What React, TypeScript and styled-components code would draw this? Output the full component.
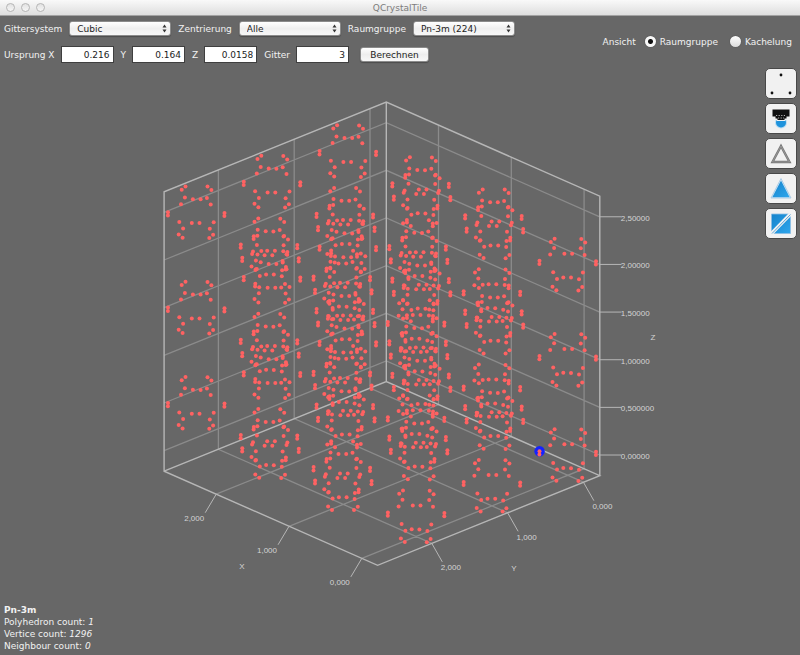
import React, { useState } from "react";
import styled, { createGlobalStyle } from "styled-components";

const GlobalStyle = createGlobalStyle`
  * { box-sizing: border-box; }
  body {
    margin: 0;
    background: #676767;
    color: #f2f2f2;
    font: 9px/12px "DejaVu Sans", Verdana, sans-serif;
  }
`;

const Window = styled.div`
  display: flex;
  flex-direction: column;
  min-height: 100vh;
`;

const TitleBar = styled.header`
  display: grid;
  grid-template-columns: 1fr auto 1fr;
  align-items: center;
  height: 16px;
  padding: 0 6px;
  background: linear-gradient(#f9f9f9, #dedede);
  border-bottom: 1px solid #a2a2a2;
`;

const WindowControls = styled.div`
  display: flex;
  gap: 6px;
`;

const Light = styled.span`
  width: 9px;
  height: 9px;
  border: 1px solid #b5b5b5;
  border-radius: 50%;
  background: linear-gradient(#e2e2e2, #f6f6f6);
`;

const Title = styled.h1`
  margin: 0;
  font-size: 9px;
  font-weight: 400;
  color: #7c7c7c;
`;

const Toolbar = styled.form`
  display: flex;
  justify-content: space-between;
  align-items: center;
  padding: 4px 8px 3px 4px;
`;

const Rows = styled.div`
  display: flex;
  flex-direction: column;
  gap: 9px;
`;

const Row = styled.div`
  display: flex;
  align-items: center;
  gap: 7px;
  height: 17px;
`;

const Field = styled.label<{ $gap: number }>`
  display: flex;
  align-items: center;
  gap: ${(p) => p.$gap}px;
  white-space: nowrap;
`;

const SelectBox = styled.span`
  position: relative;
  display: flex;
  width: 102px;
`;

const Select = styled.select`
  appearance: none;
  width: 100%;
  height: 15px;
  padding: 0 14px 0 7px;
  border: 1px solid #8b8b8b;
  border-radius: 3px;
  background: linear-gradient(#ffffff, #efefef 50%, #f7f7f7);
  box-shadow: 0 1px 1px #4c4c4c;
  color: #1c1c1c;
  font: inherit;
`;

const Arrows = styled.svg`
  position: absolute;
  right: 4px;
  top: 3px;
  pointer-events: none;
`;

const NumberInput = styled.input`
  width: 53px;
  height: 17px;
  padding: 0 3px;
  border: 1px solid #3f3f3f;
  border-radius: 0;
  background: #ffffff;
  color: #1c1c1c;
  font: inherit;
  text-align: right;
`;

const CalcButton = styled.button`
  width: 69px;
  height: 15px;
  margin-left: 4px;
  padding: 0;
  border: 1px solid #8b8b8b;
  border-radius: 3px;
  background: linear-gradient(#ffffff, #eeeeee 50%, #f8f8f8);
  box-shadow: 0 1px 1px #4c4c4c;
  color: #1c1c1c;
  font: inherit;
`;

const ViewGroup = styled.fieldset`
  display: flex;
  align-items: center;
  gap: 12px;
  margin: 0;
  padding: 0;
  border: 0;
`;

const ViewCaption = styled.span`
  margin-right: -3px;
`;

const RadioLabel = styled.label`
  display: flex;
  align-items: center;
  gap: 4px;
`;

const Radio = styled.input`
  appearance: none;
  width: 11px;
  height: 11px;
  margin: 0;
  border-radius: 50%;
  background: linear-gradient(#ffffff, #dcdcdc);
  box-shadow: 0 0 1px #333333;
  &:checked {
    background: radial-gradient(circle, #111111 0 2px, #f8f8f8 3px);
  }
`;

const Workspace = styled.main`
  display: flex;
  align-items: flex-start;
`;

const Plot = styled.svg`
  flex: 1;
  min-width: 0;
  display: block;
  font: 8px "Liberation Sans", Arial, sans-serif;
  fill: #d4d4d4;
`;

const Tools = styled.aside`
  display: flex;
  flex-direction: column;
  gap: 4px;
  width: 40px;
  padding: 2px 3px 0 5px;
`;

const ToolButton = styled.button`
  display: flex;
  align-items: center;
  justify-content: center;
  width: 32px;
  height: 31px;
  padding: 0;
  border: 1px solid #484848;
  border-radius: 5px;
  background: #f1f1f1;
  box-shadow: inset 0 0 1px #ffffff;
`;

const Status = styled.footer`
  padding: 5px 4px 0;
`;

const StatusLine = styled.div`
  line-height: 12px;
`;

type Vec = [number, number, number];

const seed: Vec = [0.216, 0.164, 0.0158];
const LOW = -0.216;
const HIGH = 2.716;

const project = ([x, y, z]: Vec): [number, number] => [
  567.7 - 72.8 * x - 75.8 * y,
  455.7 - 32.1 * x + 30.6 * y - 95.3 * z,
];

// Orbit of the seed under Pn-3m: 24 tetrahedral images and their inversions through (1/4, 1/4, 1/4).
const buildVertices = (cells: number): Vec[] => {
  const orders = [[0, 1, 2], [1, 2, 0], [2, 0, 1], [1, 0, 2], [0, 2, 1], [2, 1, 0]];
  const signs: Vec[] = [[1, 1, 1], [1, -1, -1], [-1, 1, -1], [-1, -1, 1]];
  const orbit: Vec[] = [];
  for (const o of orders) {
    for (const s of signs) {
      const p = o.map((n, i) => seed[n] * s[i]) as Vec;
      orbit.push(p, p.map((c) => 0.5 - c) as Vec);
    }
  }
  const all: Vec[] = [];
  for (let i = 0; i < cells; i++)
    for (let j = 0; j < cells; j++)
      for (let k = 0; k < cells; k++)
        for (const [x, y, z] of orbit) all.push([x + i, y + j, z + k]);
  return all;
};

const vertices = buildVertices(3);

const pathOf = (...pts: Vec[]) =>
  "M" + pts.map((p) => project(p).map((n) => n.toFixed(1)).join(" ")).join("L");

const gridPath = [
  ...[0, 1, 2].map((v) => pathOf([v, HIGH, LOW], [v, LOW, LOW], [v, LOW, HIGH])),
  ...[0, 1, 2].map((v) => pathOf([LOW, v, LOW], [HIGH, v, LOW], [HIGH, v, HIGH])),
  ...[0, 0.5, 1, 1.5, 2, 2.5].map((v) => pathOf([HIGH, HIGH, v], [HIGH, LOW, v], [LOW, LOW, v])),
].join("");

const framePath = [
  pathOf([HIGH, HIGH, LOW], [HIGH, LOW, LOW], [LOW, LOW, LOW], [LOW, HIGH, LOW], [HIGH, HIGH, LOW],
    [HIGH, HIGH, HIGH], [HIGH, LOW, HIGH], [LOW, LOW, HIGH], [LOW, LOW, LOW]),
  pathOf([HIGH, LOW, LOW], [HIGH, LOW, HIGH]),
].join("");

const zLabels = ["0,00000", "0,500000", "1,00000", "1,50000", "2,00000", "2,50000"];
const planeLabels = ["0,000", "1,000", "2,000"];

const CrystalPlot = () => {
  const [sx, sy] = project(seed);
  return (
    <Plot viewBox="0 67 760 533" role="img" aria-label="Pn-3m">
      <path d={gridPath} fill="none" stroke="#8b8b8b" strokeWidth="1.3" />
      <path d={framePath} fill="none" stroke="#b6b6b6" strokeWidth="1.4" />
      {zLabels.map((label, i) => {
        const [x, y] = project([LOW, LOW, i / 2]);
        return (
          <g key={label}>
            <path d={`M${x} ${y}h21.5`} stroke="#b6b6b6" />
            <text x={x + 21} y={y + 4}>{label}</text>
          </g>
        );
      })}
      {planeLabels.map((label, i) => {
        const [ax, ay] = project([i, HIGH, LOW]);
        const [bx, by] = project([LOW, i, LOW]);
        return (
          <g key={label}>
            <path d={`M${ax} ${ay}l-11 18.5M${bx} ${by}l10.5 18.5`} stroke="#b6b6b6" />
            <text x={ax - 12} y={ay + 27} textAnchor="end">{label}</text>
            <text x={bx + 9} y={by + 27}>{label}</text>
          </g>
        );
      })}
      <text x="242" y="570" textAnchor="middle">X</text>
      <text x="514" y="572" textAnchor="middle">Y</text>
      <text x="653" y="341" textAnchor="middle">Z</text>
      <circle cx={sx} cy={sy} r="5.2" fill="#1522ff" />
      <g fill="#ff6262">
        {vertices.map((v, i) => {
          const [x, y] = project(v);
          return <circle key={i} cx={x.toFixed(1)} cy={y.toFixed(1)} r="2" />;
        })}
      </g>
    </Plot>
  );
};

const PointsIcon = () => (
  <svg width="26" height="26" viewBox="0 0 26 26" fill="#111">
    <circle cx="13" cy="4" r="1.4" />
    <circle cx="4" cy="22" r="1.4" />
    <circle cx="22" cy="22" r="1.4" />
  </svg>
);

const CameraIcon = () => (
  <svg width="26" height="26" viewBox="0 0 26 26">
    <circle cx="13" cy="16.5" r="6" fill="#b9dcf3" />
    <circle cx="13" cy="16.5" r="5" fill="#1f93dc" />
    <path d="M7 9h12v3l-2 3H9l-2-3z" fill="#f1f1f1" />
    <path d="M4.500 3.500h17v7h-3v2h-2v1.500h-7v-1.500h-2v-2h-3z" fill="#111" />
    <path d="M8 9.500h10M10 12h6" stroke="#ddd" strokeWidth=".8" strokeDasharray="1.200 1.400" />
  </svg>
);

const OutlineIcon = () => (
  <svg width="26" height="26" viewBox="0 0 26 26">
    <path d="M13 5L21.500 21h-17z" fill="none" stroke="#777" strokeWidth="2.400" />
    <path d="M13 5L21.500 21h-17z" fill="none" stroke="#aaa" strokeWidth=".6" />
  </svg>
);

const BlueGradient = ({ id }: { id: string }) => (
  <linearGradient id={id} x1="0" y1="0" x2="1" y2="1">
    <stop offset="0" stopColor="#1583cb" />
    <stop offset="1" stopColor="#2fa6ec" />
  </linearGradient>
);

const FilledIcon = () => (
  <svg width="26" height="26" viewBox="0 0 26 26">
    <BlueGradient id="filled" />
    <path d="M13 2.500L23 22H3z" fill="#e4f1fa" stroke="#9cc3e2" strokeWidth=".8" />
    <path d="M13 4.500L21.700 21.200H4.300z" fill="url(#filled)" />
  </svg>
);

const SplitIcon = () => (
  <svg width="26" height="26" viewBox="0 0 26 26">
    <BlueGradient id="split" />
    <path d="M3.500 3h18L3.500 21zM22.500 4v18.500h-18z" fill="url(#split)" stroke="#8dbee3" strokeWidth=".8" />
    <path d="M3.500 22.500L22.500 3" stroke="#f1f1f1" strokeWidth="3.600" />
    <path d="M4 22.500L22.500 3.500" stroke="#5aa5d8" strokeWidth="1" />
  </svg>
);

const tools = [
  { label: "Punkte", Icon: PointsIcon },
  { label: "Kamera", Icon: CameraIcon },
  { label: "Kanten", Icon: OutlineIcon },
  { label: "Flächen", Icon: FilledIcon },
  { label: "Abstand", Icon: SplitIcon },
];

const Dropdown = ({ label, value }: { label: string; value: string }) => (
  <Field $gap={7}>
    {label}
    <SelectBox>
      <Select defaultValue={value}>
        <option>{value}</option>
      </Select>
      <Arrows width="5" height="9" viewBox="0 0 5 9" fill="#333">
        <path d="M2.500 0.500L4.500 3.500h-4zM2.500 8.500L4.500 5.500h-4z" />
      </Arrows>
    </SelectBox>
  </Field>
);

const NumberField = ({ label, value }: { label: string; value: string }) => (
  <Field $gap={6}>
    {label}
    <NumberInput type="text" inputMode="decimal" defaultValue={value} />
  </Field>
);

export default function App() {
  const [view, setView] = useState("Raumgruppe");
  return (
    <Window>
      <GlobalStyle />
      <TitleBar>
        <WindowControls>
          <Light />
          <Light />
          <Light />
        </WindowControls>
        <Title>QCrystalTile</Title>
      </TitleBar>
      <Toolbar onSubmit={(e) => e.preventDefault()}>
        <Rows>
          <Row>
            <Dropdown label="Gittersystem" value="Cubic" />
            <Dropdown label="Zentrierung" value="Alle" />
            <Dropdown label="Raumgruppe" value="Pn-3m (224)" />
          </Row>
          <Row>
            <NumberField label="Ursprung X" value="0.216" />
            <NumberField label="Y" value="0.164" />
            <NumberField label="Z" value="0.0158" />
            <NumberField label="Gitter" value="3" />
            <CalcButton type="submit">Berechnen</CalcButton>
          </Row>
        </Rows>
        <ViewGroup>
          <ViewCaption>Ansicht</ViewCaption>
          {["Raumgruppe", "Kachelung"].map((name) => (
            <RadioLabel key={name}>
              <Radio type="radio" name="view" checked={view === name} onChange={() => setView(name)} />
              {name}
            </RadioLabel>
          ))}
        </ViewGroup>
      </Toolbar>
      <Workspace>
        <CrystalPlot />
        <Tools>
          {tools.map(({ label, Icon }) => (
            <ToolButton key={label} type="button" aria-label={label}>
              <Icon />
            </ToolButton>
          ))}
        </Tools>
      </Workspace>
      <Status>
        <StatusLine><b>Pn-3m</b></StatusLine>
        <StatusLine>Polyhedron count: <i>1</i></StatusLine>
        <StatusLine>Vertice count: <i>1296</i></StatusLine>
        <StatusLine>Neighbour count: <i>0</i></StatusLine>
      </Status>
    </Window>
  );
}
